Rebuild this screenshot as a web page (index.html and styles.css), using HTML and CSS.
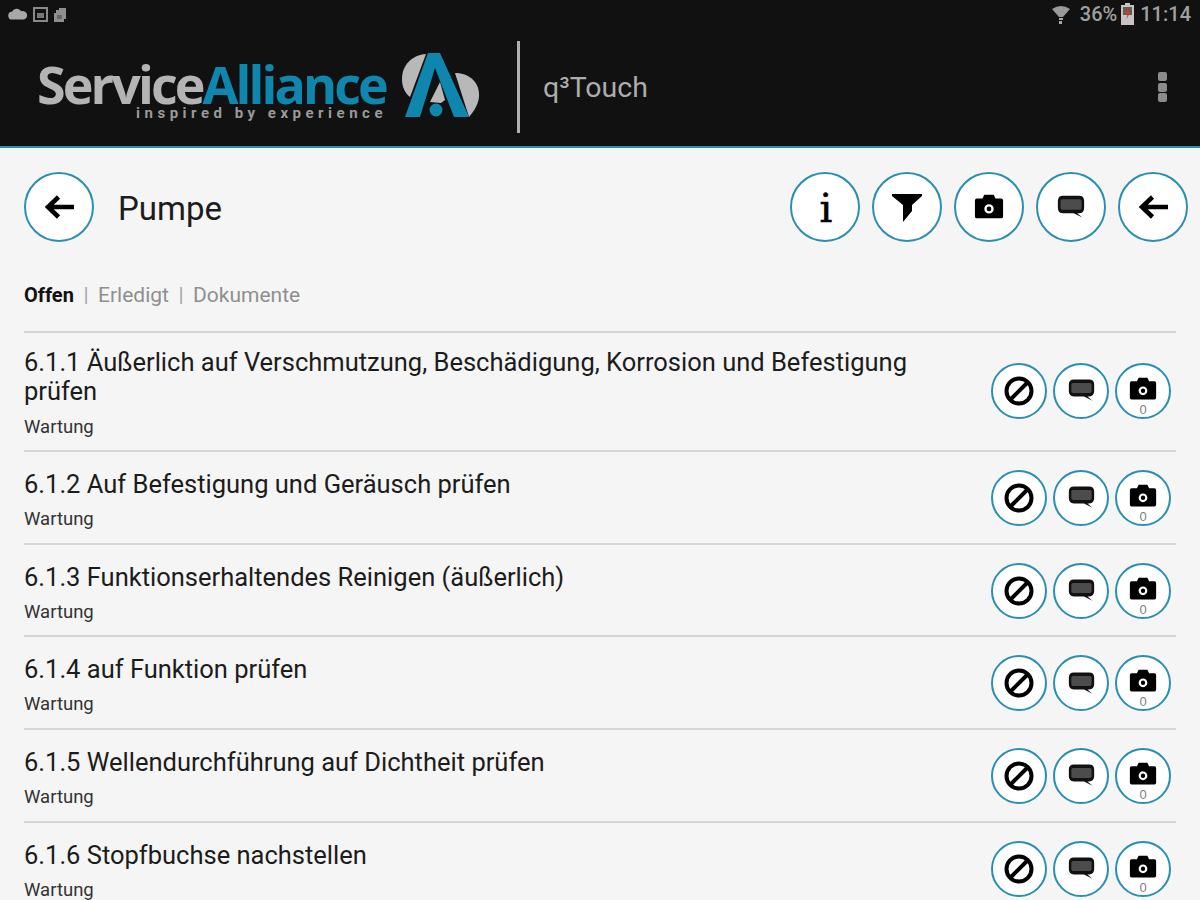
FILE: index.html
```html
<!DOCTYPE html>
<html lang="de">
<head>
    <meta charset="UTF-8">
    <title>q³Touch</title>
    <link rel="stylesheet" href="styles.css">
</head>
<body>
    <svg class="sprites" width="0" height="0">
        <symbol id="i-back" viewBox="0 0 32 32"><path d="M31 16H6M15.500 6 5 16l10.500 10" fill="none" stroke="currentColor" stroke-width="4.500"/></symbol>
        <symbol id="i-filter" viewBox="0 0 32 32"><path d="M1 3h30v2L21 14v6L12 31V14L1 5z" fill="currentColor"/></symbol>
        <symbol id="i-camera" viewBox="0 0 32 32"><path fill-rule="evenodd" fill="currentColor" d="M3 7h6l2-4h10l2 4h6q2 0 2 2v17q0 2-2 2H3q-2 0-2-2V9q0-2 2-2zm13 6a5 5 0 1 0 0 10 5 5 0 0 0 0-10zm0 2.500a2.500 2.500 0 1 1 0 5 2.500 2.500 0 0 1 0-5z"/></symbol>
        <symbol id="i-comment" viewBox="0 0 32 32"><path d="M7 3h18q6 0 6 6v8q0 6-6 6h-2l6 5-10-5H7q-6 0-6-6V9q0-6 6-6z" fill="#111"/><rect x="4" y="7" width="24" height="12" rx="2" fill="#4c4c4c"/></symbol>
        <symbol id="i-block" viewBox="0 0 32 32"><circle cx="16" cy="16" r="12.500" fill="none" stroke="currentColor" stroke-width="4"/><path d="M7 25 25 7" stroke="currentColor" stroke-width="4"/></symbol>
    </svg>

    <div class="status-bar">
        <div class="status-left">
            <svg width="20" height="12" viewBox="0 0 18 10"><path d="M4 10a3.500 3.500 0 0 1-.5-7A5 5 0 0 1 12 2.500 3.800 3.800 0 0 1 14.500 10z" fill="#a8a8a8"/></svg>
            <svg width="15" height="15" viewBox="0 0 15 15"><path fill-rule="evenodd" d="M0 0h15v15H0zM2 2v11h11V2z" fill="#8a8a8a"/><path d="M4 6h7v5H4z" fill="#777"/></svg>
            <svg width="14" height="15" viewBox="0 0 14 15"><path d="M1 6h2V3h3V1h7v11h-2v3H1z" fill="#8f8f8f"/><path d="M4 8h5v4H4z" fill="#666"/></svg>
        </div>
        <div class="status-right">
            <svg class="wifi" width="18" height="18" viewBox="0 0 18 18"><path d="M0 3q9-6 18 0l-7 8H7z" fill="#9a9a9a"/><path d="M7 12h4v2H7zM7 15h3v3H7z" fill="#a8a8a8"/></svg>
            <span class="pct">36%</span>
            <svg class="battery" width="13" height="22" viewBox="0 0 13 22"><path d="M4 0h5v2h4v20H0V2h4z" fill="#c4c4c4"/><path d="M2 4h9v8H2z" fill="#6a5a50"/><path d="M7.500 4 3.500 11h3L5.500 16l4-7h-3z" fill="#d23a20"/></svg>
            <span>11:14</span>
        </div>
    </div>

    <header class="app-bar">
        <div class="logo">
            <div class="logo-text">
                <div class="logo-name">Service<span class="blue">Alliance</span></div>
                <div class="logo-tag">inspired by experience</div>
            </div>
            <svg class="logo-mark" width="80" height="68" viewBox="0 0 80 68">
                <path d="M24 1C10 2 0 12 0 26c0 8 3 14 8 18z" fill="#b8b8b8"/>
                <path d="M53 20c15 0 25 10 24 24-1 8-5 14-10 20z" fill="#b8b8b8"/>
                <path d="M28 49l10-20 5 18-4 3z" fill="#b8b8b8"/>
                <path d="M26 0h12l29 64H52L33 15 18 64H3z" fill="#0f86ad"/>
                <circle cx="34" cy="57" r="6.500" fill="#0f86ad"/>
            </svg>
        </div>
        <div class="bar-sep"></div>
        <div class="app-name">q³Touch</div>
        <div class="menu-dots"><i></i><i></i><i></i></div>
    </header>

    <main class="content">
        <div class="head-row">
            <button class="circle big"><svg width="32" height="32"><use href="#i-back"/></svg></button>
            <h1 class="page-title">Pumpe</h1>
            <div class="head-actions">
                <button class="circle big"><span class="info">i</span></button>
                <button class="circle big"><svg width="32" height="32"><use href="#i-filter"/></svg></button>
                <button class="circle big"><svg width="30" height="30"><use href="#i-camera"/></svg></button>
                <button class="circle big"><svg width="28" height="28"><use href="#i-comment"/></svg></button>
                <button class="circle big"><svg width="32" height="32"><use href="#i-back"/></svg></button>
            </div>
        </div>

        <nav class="tabs">
            <span class="tab active">Offen</span>
            <span class="tab-sep">|</span>
            <span class="tab">Erledigt</span>
            <span class="tab-sep">|</span>
            <span class="tab">Dokumente</span>
        </nav>

        <ul class="task-list">
            <li class="task first">
                <div class="task-text">
                    <div class="task-title">6.1.1 Äußerlich auf Verschmutzung, Beschädigung, Korrosion und Befestigung prüfen</div>
                    <div class="task-type">Wartung</div>
                </div>
                <div class="task-actions">
                    <button class="circle"><svg width="32" height="32"><use href="#i-block"/></svg></button>
                    <button class="circle"><svg width="27" height="27"><use href="#i-comment"/></svg></button>
                    <button class="circle"><svg class="cam" width="28" height="28"><use href="#i-camera"/></svg><span class="count">0</span></button>
                </div>
            </li>
            <li class="task">
                <div class="task-text">
                    <div class="task-title">6.1.2 Auf Befestigung und Geräusch prüfen</div>
                    <div class="task-type">Wartung</div>
                </div>
                <div class="task-actions">
                    <button class="circle"><svg width="32" height="32"><use href="#i-block"/></svg></button>
                    <button class="circle"><svg width="27" height="27"><use href="#i-comment"/></svg></button>
                    <button class="circle"><svg class="cam" width="28" height="28"><use href="#i-camera"/></svg><span class="count">0</span></button>
                </div>
            </li>
            <li class="task">
                <div class="task-text">
                    <div class="task-title">6.1.3 Funktionserhaltendes Reinigen (äußerlich)</div>
                    <div class="task-type">Wartung</div>
                </div>
                <div class="task-actions">
                    <button class="circle"><svg width="32" height="32"><use href="#i-block"/></svg></button>
                    <button class="circle"><svg width="27" height="27"><use href="#i-comment"/></svg></button>
                    <button class="circle"><svg class="cam" width="28" height="28"><use href="#i-camera"/></svg><span class="count">0</span></button>
                </div>
            </li>
            <li class="task">
                <div class="task-text">
                    <div class="task-title">6.1.4 auf Funktion prüfen</div>
                    <div class="task-type">Wartung</div>
                </div>
                <div class="task-actions">
                    <button class="circle"><svg width="32" height="32"><use href="#i-block"/></svg></button>
                    <button class="circle"><svg width="27" height="27"><use href="#i-comment"/></svg></button>
                    <button class="circle"><svg class="cam" width="28" height="28"><use href="#i-camera"/></svg><span class="count">0</span></button>
                </div>
            </li>
            <li class="task">
                <div class="task-text">
                    <div class="task-title">6.1.5 Wellendurchführung auf Dichtheit prüfen</div>
                    <div class="task-type">Wartung</div>
                </div>
                <div class="task-actions">
                    <button class="circle"><svg width="32" height="32"><use href="#i-block"/></svg></button>
                    <button class="circle"><svg width="27" height="27"><use href="#i-comment"/></svg></button>
                    <button class="circle"><svg class="cam" width="28" height="28"><use href="#i-camera"/></svg><span class="count">0</span></button>
                </div>
            </li>
            <li class="task">
                <div class="task-text">
                    <div class="task-title">6.1.6 Stopfbuchse nachstellen</div>
                    <div class="task-type">Wartung</div>
                </div>
                <div class="task-actions">
                    <button class="circle"><svg width="32" height="32"><use href="#i-block"/></svg></button>
                    <button class="circle"><svg width="27" height="27"><use href="#i-comment"/></svg></button>
                    <button class="circle"><svg class="cam" width="28" height="28"><use href="#i-camera"/></svg><span class="count">0</span></button>
                </div>
            </li>
        </ul>
    </main>
</body>
</html>
```

FILE: styles.css
```css
:root {
    --bar: #111111;
    --page: #f5f5f5;
    --accent: #2a8fb0;
    --text: #1c1c1c;
    --muted: #8f8f8f;
    --line: #d6d6d6;
}

* { box-sizing: border-box; margin: 0; padding: 0; }

html, body {
    height: 900px;
    overflow: hidden;
}

body {
    font-family: 'Roboto', sans-serif;
    background: var(--page);
    color: var(--text);
}

.sprites { display: block; }

.status-bar {
    height: 28px;
    background: var(--bar);
    color: #a0a0a0;
    display: flex;
    justify-content: space-between;
    align-items: center;
    padding: 0 9px 0 8px;
    font-size: 20px;
    font-weight: 500;
}

.status-left, .status-right {
    display: flex;
    align-items: center;
    gap: 5px;
}

.status-right { gap: 4px; }
.status-right .pct { margin-left: 6px; }
.status-right .battery { margin-right: 2px; }
.wifi { margin-top: 1px; }

.app-bar {
    height: 120px;
    background: var(--bar);
    border-bottom: 2px solid var(--accent);
    display: flex;
    align-items: center;
    padding: 0 33px 0 37px;
}

.logo {
    display: flex;
    align-items: center;
    gap: 15px;
}

.logo-text {
    width: 350px;
    margin-top: 7px;
}

.logo-name {
    font-family: 'Open Sans', sans-serif;
    font-weight: 700;
    font-size: 52px;
    line-height: 46px;
    letter-spacing: -2.9px;
    color: #b4b4b4;
    white-space: nowrap;
    position: relative;
    top: 1px;
}

.blue { color: #0f86ad; }

.logo-tag {
    font-size: 15px;
    font-weight: 700;
    line-height: 15px;
    letter-spacing: 4.5px;
    color: #9a9a9a;
    text-align: right;
    white-space: nowrap;
}

.bar-sep {
    width: 3px;
    height: 92px;
    background: #b0b0b0;
    margin: 0 23px 0 35px;
}

.app-name {
    font-size: 28.500px;
    color: #adadad;
}

.menu-dots {
    margin-left: auto;
    display: flex;
    flex-direction: column;
    gap: 1.500px;
}

.menu-dots i {
    display: block;
    width: 9px;
    height: 9px;
    border-radius: 2px;
    background: #8c8c8c;
}

.content { padding: 24px 12px 0 24px; }

.head-row {
    display: flex;
    align-items: center;
}

.circle {
    position: relative;
    width: 56px;
    height: 56px;
    flex: none;
    border-radius: 50%;
    border: 2.500px solid var(--accent);
    background: #ffffff;
    color: #000000;
    display: flex;
    align-items: center;
    justify-content: center;
}

.circle.big {
    width: 70px;
    height: 70px;
}

.page-title {
    font-size: 33px;
    font-weight: 400;
    margin-left: 24px;
    margin-top: 2px;
}

.head-actions {
    margin-left: auto;
    display: flex;
    gap: 12px;
}

.info {
    font-family: 'DejaVu Serif', serif;
    font-size: 40px;
    line-height: 1;
    -webkit-text-stroke: 0.600px #000000;
    padding: 2px 0 0 2px;
}

.tabs {
    display: flex;
    align-items: center;
    gap: 9.500px;
    margin-top: 39px;
    font-size: 21px;
    line-height: 28px;
    color: var(--muted);
}

.tab.active {
    color: #111111;
    font-size: 20px;
    font-weight: 700;
}

.tab-sep { color: #a5a5a5; }

.task-list {
    list-style: none;
    margin-top: 22px;
}

.task {
    height: 92.700px;
    border-top: 2px solid var(--line);
    display: flex;
    justify-content: space-between;
    align-items: center;
    position: relative;
}

.task.first { height: 119px; }

.task::after {
    content: '';
    position: absolute;
    top: -2px;
    right: 0;
    width: 12px;
    height: 2px;
    background: var(--page);
}

.task-text {
    width: 920px;
    align-self: flex-start;
    padding-top: 18px;
}

.first .task-text { padding-top: 15px; }

.task-title {
    font-size: 25.500px;
    line-height: 29px;
    color: var(--text);
}

.task-type {
    font-size: 18.500px;
    line-height: 24px;
    margin-top: 8px;
    color: #333333;
}

.first .task-type { margin-top: 9px; }

.task-actions {
    display: flex;
    gap: 6px;
    margin-top: 1px;
    margin-right: 17px;
}

.first .task-actions { margin-top: -2px; }

.cam { margin-bottom: 4px; }

.count {
    position: absolute;
    bottom: 1px;
    left: 0;
    right: 0;
    text-align: center;
    font-size: 13px;
    line-height: 13px;
    color: #808080;
}
```
